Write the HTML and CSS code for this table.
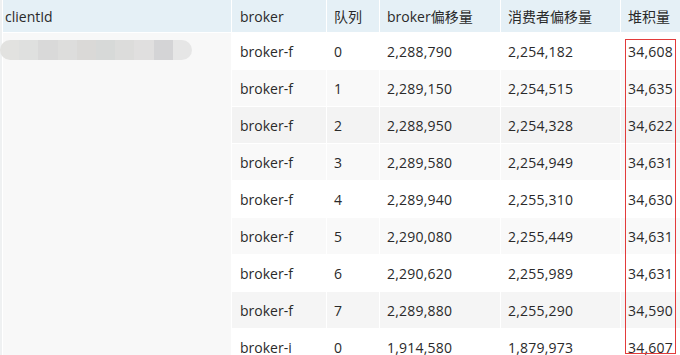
FILE: index.html
```html
<!DOCTYPE html>
<html>
<head>
<meta charset="utf-8">
<link rel="stylesheet" href="styles.css">
</head>
<body>
<div class="wrap">
<table class="grid">
  <thead>
    <tr>
      <th class="c-client">clientId</th>
      <th class="c-broker">broker</th>
      <th class="c-queue">队列</th>
      <th class="c-boff">broker偏移量</th>
      <th class="c-coff">消费者偏移量</th>
      <th class="c-lag">堆积量</th>
    </tr>
  </thead>
  <tbody>
    <tr>
      <td class="client" rowspan="9"><div class="redact"><i></i><i></i><i></i><i></i><i></i><i></i><i></i><i></i><i></i><i></i></div></td>
      <td>broker-f</td><td class="num">0</td><td class="num">2,288,790</td><td class="num">2,254,182</td><td class="num">34,608</td>
    </tr>
    <tr class="odd"><td>broker-f</td><td class="num">1</td><td class="num">2,289,150</td><td class="num">2,254,515</td><td class="num">34,635</td></tr>
    <tr class="hover"><td>broker-f</td><td class="num">2</td><td class="num">2,288,950</td><td class="num">2,254,328</td><td class="num">34,622</td></tr>
    <tr class="odd"><td>broker-f</td><td class="num">3</td><td class="num">2,289,580</td><td class="num">2,254,949</td><td class="num">34,631</td></tr>
    <tr><td>broker-f</td><td class="num">4</td><td class="num">2,289,940</td><td class="num">2,255,310</td><td class="num">34,630</td></tr>
    <tr class="odd"><td>broker-f</td><td class="num">5</td><td class="num">2,290,080</td><td class="num">2,255,449</td><td class="num">34,631</td></tr>
    <tr><td>broker-f</td><td class="num">6</td><td class="num">2,290,620</td><td class="num">2,255,989</td><td class="num">34,631</td></tr>
    <tr class="odd2"><td>broker-f</td><td class="num">7</td><td class="num">2,289,880</td><td class="num">2,255,290</td><td class="num">34,590</td></tr>
    <tr><td>broker-i</td><td class="num">0</td><td class="num">1,914,580</td><td class="num">1,879,973</td><td class="num">34,607</td></tr>
  </tbody>
</table>
<div class="mark"></div>
</div>
</body>
</html>
```
FILE: styles.css
```css
html, body {
  margin: 0;
  padding: 0;
  background: #fff;
  overflow: hidden;
}
.wrap {
  position: relative;
  width: 680px;
  height: 355px;
  overflow: hidden;
  background: #eff1f2;
  padding-left: 3px;
  box-sizing: border-box;
}
.grid {
  border-collapse: separate;
  border-spacing: 1px;
  margin: -1px 0 0 -1px;
  background: #fff;
  font-family: "Open Sans", "Noto Sans CJK SC", sans-serif;
  font-size: 14px;
  color: #2a2a2a;
  table-layout: fixed;
  width: 700px;
}
.grid th {
  background: #e5f0f6;
  font-weight: normal;
  text-align: left;
  height: 32px;
  padding: 0 0 0 7px;
  box-sizing: border-box;
  vertical-align: middle;
}
.grid th.c-client { padding-left: 2px; }
.grid th.c-broker { padding-left: 8px; }
.c-client { width: 228px; }
.c-broker { width: 94px; }
.c-queue { width: 52px; }
.c-boff { width: 120px; }
.c-coff { width: 119px; }
.c-lag { width: 80px; }
.grid td {
  height: 36px;
  padding: 0 0 0 8px;
  box-sizing: border-box;
  background: #fff;
  white-space: nowrap;
}
.grid td.num {
  padding-left: 7px;
  letter-spacing: 0.2px;
}
.grid tr.odd td { background: #f9f9f9; }
.grid tr.odd2 td { background: #f5f5f5; }
.grid tr.hover td { background: #f3f3f3; }
.grid td.client {
  background: #f8f8f8 !important;
  vertical-align: top;
  padding: 0;
  position: relative;
}
.redact {
  position: absolute;
  left: -3px;
  top: 7px;
  width: 192px;
  height: 20px;
  border-radius: 10px;
  overflow: hidden;
  display: flex;
}
.redact i {
  flex: 1;
  display: block;
}
.redact i:nth-child(1) { background: #e2e2e0; }
.redact i:nth-child(2) { background: #dfe0df; }
.redact i:nth-child(3) { background: #d9d9d9; }
.redact i:nth-child(4) { background: #dddddc; }
.redact i:nth-child(5) { background: #dad9d7; }
.redact i:nth-child(6) { background: #d7d9d8; }
.redact i:nth-child(7) { background: #dcdcdb; }
.redact i:nth-child(8) { background: #e0dfdf; }
.redact i:nth-child(9) { background: #d4d4d6; }
.redact i:nth-child(10) { background: #e6e6e6; }
.mark {
  position: absolute;
  left: 625px;
  top: 39px;
  width: 51px;
  height: 315px;
  border: 1.5px solid #e33b3b;
  box-sizing: border-box;
}
```
